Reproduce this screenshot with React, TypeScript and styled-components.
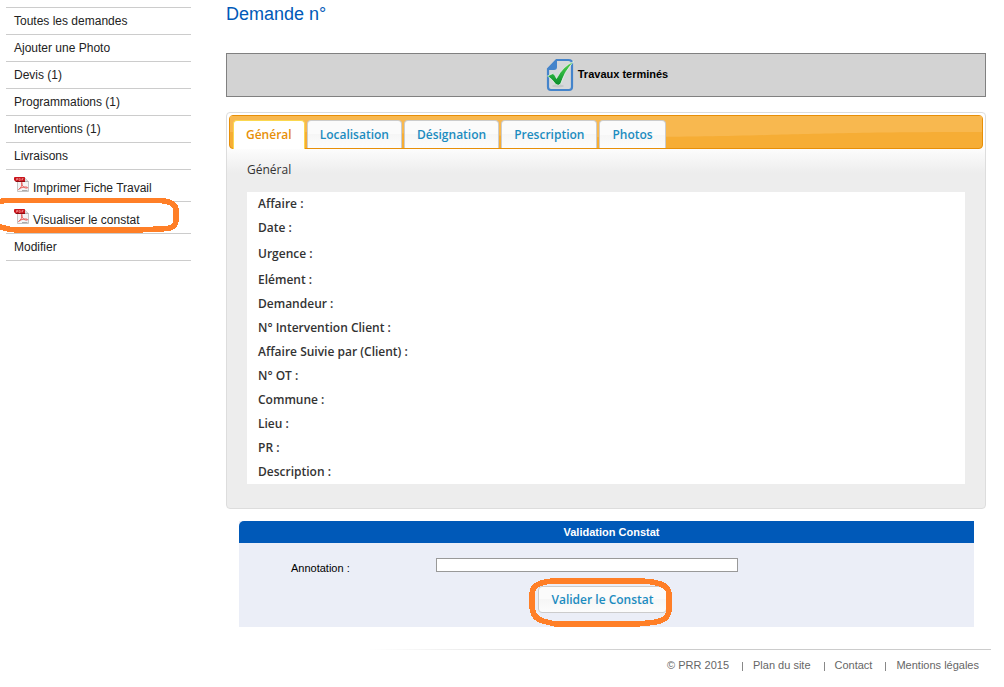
import React from "react";
import styled, { createGlobalStyle, css } from "styled-components";

const GlobalStyle = createGlobalStyle`
  * { box-sizing: border-box; }
  body {
    margin: 0;
    background: #fff;
    color: #222;
    font-family: "Liberation Sans", Arial, sans-serif;
    font-size: 12px;
  }
`;

const humanist = css`
  font-family: "Open Sans", "Trebuchet MS", sans-serif;
  font-size: 12px;
`;

const Page = styled.div`
  display: flex;
  align-items: flex-start;
  gap: 35px;
  padding: 0 13px 0 6px;
`;

const Sidebar = styled.nav`
  flex: 0 0 185px;
  margin-top: 7px;
`;

const Menu = styled.ul`
  list-style: none;
  margin: 0;
  padding: 0;
  border-top: 1px solid #ccc;
`;

const MenuItem = styled.li`
  position: relative;
  border-bottom: 1px solid #ccc;
`;

const MenuLink = styled.a<{ $withIcon?: boolean }>`
  display: flex;
  align-items: ${(p) => (p.$withIcon ? "flex-start" : "center")};
  gap: 3px;
  height: ${(p) => (p.$withIcon ? 31 : 26)}px;
  padding: ${(p) => (p.$withIcon ? "6px 8px 0" : "0 8px")};
  color: #222;
  text-decoration: none;
  white-space: nowrap;

  span {
    line-height: 14px;
    padding-top: ${(p) => (p.$withIcon ? 5 : 0)}px;
  }
`;

const Main = styled.main`
  flex: 1;
  min-width: 0;
`;

const Body = styled.div`
  margin-right: 5px;
`;

const Title = styled.h1`
  margin: 4px 0 0;
  color: #0059b8;
  font-size: 18px;
  font-weight: 400;
  line-height: 20px;
`;

const StatusBar = styled.div`
  display: flex;
  align-items: center;
  justify-content: center;
  gap: 4px;
  height: 44px;
  margin-top: 29px;
  padding-left: 2px;
  border: 1px solid #808080;
  background: #d3d3d3;
  color: #000;
  font-size: 11px;
  font-weight: 700;
  line-height: 14px;

  span {
    padding-bottom: 2px;
  }
`;

const TabsBox = styled.section`
  margin-top: 15px;
  padding: 2px;
  border: 1px solid #ddd;
  border-radius: 4px;
  background: linear-gradient(#fff 34px, #fbfbfb 38px, #ededed 60px);
`;

const TabStrip = styled.div`
  position: relative;
  display: flex;
  align-items: flex-end;
  gap: 2px;
  height: 34px;
  padding-left: 3px;
  border: 1px solid #e78f08;
  border-radius: 4px;
  background: #f6ad35;
`;

const Gloss = styled.svg`
  position: absolute;
  inset: 0;
  width: 100%;
  height: 100%;
`;

const Tab = styled.button<{ $active?: boolean }>`
  ${humanist}
  position: relative;
  height: ${(p) => (p.$active ? 29 : 28)}px;
  margin-bottom: ${(p) => (p.$active ? -1 : 0)}px;
  padding: 0 12px;
  border: 1px solid ${(p) => (p.$active ? "#fbd850" : "#ccc")};
  border-bottom: 0;
  border-radius: 4px 4px 0 0;
  background: ${(p) => (p.$active ? "#fff" : "linear-gradient(#fbfbfb 50%, #f6f6f6 50%, #fcfcfc)")};
  color: ${(p) => (p.$active ? "#e78f08" : "#1c8cc0")};
  font-weight: 600;
  line-height: 16px;
  white-space: nowrap;
`;

const TabPanel = styled.div`
  padding: 13px 18px 22px;
  color: #333;
`;

const PanelTitle = styled.h2`
  ${humanist}
  margin: 0 0 14px;
  font-weight: 400;
  line-height: 16px;
`;

const Details = styled.table`
  ${humanist}
  width: 100%;
  border-collapse: collapse;
  background: #fff;
`;

const DetailRow = styled.tr<{ $tall?: boolean }>`
  height: ${(p) => (p.$tall ? 28 : 24)}px;

  th {
    width: 45%;
    padding: 0 11px;
    font-weight: 600;
    text-align: left;
    line-height: 16px;
  }
  td {
    padding: 0;
  }
`;

const Form = styled.form`
  margin: 12px 12px 0 13px;
  background: #ebeef7;
  font-size: 11px;
  color: #000;
`;

const FormTitle = styled.h2`
  margin: 0;
  padding-left: 10px;
  border-radius: 5px 0 0 0;
  background: #0059b8;
  color: #fff;
  font-size: 11px;
  line-height: 22px;
  text-align: center;
`;

const Field = styled.div`
  display: flex;
  align-items: flex-start;
  padding: 15px 20px 0 52px;

  label {
    flex: 0 0 145px;
    padding-top: 3px;
    line-height: 14px;
  }
  input {
    width: 302px;
    height: 14px;
    padding: 0 2px;
    border: 1px solid #999;
    background: #fff;
    font: inherit;
  }
`;

const Actions = styled.div`
  display: flex;
  justify-content: center;
  padding: 11px 8px 14px 0;
`;

const Marked = styled.div`
  position: relative;
`;

const SubmitButton = styled.button`
  ${humanist}
  display: block;
  height: 27px;
  padding: 0 12px;
  border: 1px solid #ccc;
  border-radius: 4px;
  background: linear-gradient(#fbfbfb 50%, #f6f6f6 50%, #fcfcfc);
  color: #1c8cc0;
  font-weight: 600;
  line-height: 16px;
`;

const Marker = styled.svg<{ $left: number; $top: number }>`
  position: absolute;
  left: ${(p) => p.$left}px;
  top: ${(p) => p.$top}px;
  overflow: visible;
  pointer-events: none;
  fill: none;
  stroke: #ff7f27;
  stroke-width: 5.5;
`;

const Footer = styled.footer`
  margin: 22px 0 0 142px;
  padding: 8px 12px 14px 0;
  border-top: 1px solid;
  border-image: linear-gradient(to right, #fff, #ccc 45%) 1;
`;

const FooterList = styled.ul`
  display: flex;
  justify-content: flex-end;
  list-style: none;
  margin: 0;
  padding: 0;
  color: #666;
  font-size: 11px;
  line-height: 14px;

  li + li {
    display: flex;
    align-items: center;
    margin-left: 13px;
  }
  li + li::before {
    content: "";
    width: 1px;
    height: 9px;
    margin: 2px 10px 0 0;
    background: #888;
  }
  a {
    color: inherit;
    text-decoration: none;
  }
`;

const PdfIcon = () => (
  <svg width="16" height="16" viewBox="0 0 16 16" aria-hidden="true">
    <path d="M3.5 1.5H10.5L14.5 5.5V15.5H3.5Z" fill="#f3f3f3" stroke="#c4c4c4" />
    <path d="M10.5 1.5V5.5H14.5" fill="#dcdcdc" stroke="#b0b0b0" />
    <path d="M4.5 13.500C7 12 8.500 9 8 6.500C7.500 5.500 7 7 8 9C9 11 11 12.500 13.500 12C14.500 11 11 10.500 8 11.500C6.500 12 5 13 4.500 13.500Z" fill="none" stroke="#e8605c" />
    <path d="M0 2Q0 1 1 1H10Q11 1 11 2V5H1L0 4Z" fill="#c9141b" />
    <path d="M1 5H11V6H2Z" fill="#8f0d12" />
    <path d="M2.500 4.500V2.500H4V3.500H2.500M5.200 2.500V4.500H6.200L6.700 3.500L6.200 2.500ZM8 4.500V2.500H9.500M8 3.500H9" fill="none" stroke="#f3a3a3" strokeWidth=".6" />
    <path d="M8 14.500H13.500" stroke="#aaa" />
  </svg>
);

const DoneIcon = () => (
  <svg width="28" height="34" viewBox="0 0 28 34" aria-hidden="true">
    <defs>
      <linearGradient id="tick" x1="0" y1="0" x2="0" y2="1">
        <stop offset="0" stopColor="#5ad04f" />
        <stop offset="0.5" stopColor="#2cb33f" />
        <stop offset="1" stopColor="#078a2b" />
      </linearGradient>
    </defs>
    <path d="M10.500 2H22.500Q26 2 26 5V29Q26 32 23 32H5Q2 32 2 29V11Z" fill="#d6d8da" stroke="#4484cb" strokeWidth="2.200" />
    <path d="M1 12L11 1V9Q11 12 8 12Z" fill="#4484cb" />
    <ellipse cx="12" cy="28" rx="6" ry="1.500" fill="#c3c7c9" />
    <path d="M1.500 18L7 15.500Q9 17 10.500 20.500Q17 8 27.500 3.500Q18 14 14.500 26Q12.500 28 10 26.500Q6 21 1.500 18Z" fill="url(#tick)" stroke="#edf5ed" strokeWidth=".7" />
  </svg>
);

const menu: { label: string; pdf?: boolean; marked?: boolean }[] = [
  { label: "Toutes les demandes" },
  { label: "Ajouter une Photo" },
  { label: "Devis (1)" },
  { label: "Programmations (1)" },
  { label: "Interventions (1)" },
  { label: "Livraisons" },
  { label: "Imprimer Fiche Travail", pdf: true },
  { label: "Visualiser le constat", pdf: true, marked: true },
  { label: "Modifier" },
];

const tabs = ["Général", "Localisation", "Désignation", "Prescription", "Photos"];

const details = [
  "Affaire",
  "Date",
  "Urgence",
  "Elément",
  "Demandeur",
  "N° Intervention Client",
  "Affaire Suivie par (Client)",
  "N° OT",
  "Commune",
  "Lieu",
  "PR",
  "Description",
];

export default function App() {
  return (
    <>
      <GlobalStyle />
      <Page>
        <Sidebar>
          <Menu>
            {menu.map((item) => (
              <MenuItem key={item.label}>
                <MenuLink href="#" $withIcon={item.pdf}>
                  {item.pdf && <PdfIcon />}
                  <span>{item.label}</span>
                </MenuLink>
                {item.marked && (
                  <Marker $left={-6} $top={-5} width="180" height="37" shapeRendering="crispEdges">
                    <path d="M-3 5L5 3.500H158C169 4 175 6 176 12V23C176 30 171 32 158 32L138 33H16L8 32L-3 29" />
                  </Marker>
                )}
              </MenuItem>
            ))}
          </Menu>
        </Sidebar>
        <Main>
          <Body>
            <Title>Demande n°</Title>
            <StatusBar>
              <DoneIcon />
              <span>Travaux terminés</span>
            </StatusBar>
            <TabsBox>
              <TabStrip role="tablist">
                <Gloss viewBox="0 0 754 32" preserveAspectRatio="none" aria-hidden="true">
                  <path d="M0 0H754V16C560 16 540 21 400 21C240 21 200 16 0 16Z" fill="#f8b84f" />
                </Gloss>
                {tabs.map((tab, i) => (
                  <Tab key={tab} type="button" role="tab" aria-selected={i === 0} $active={i === 0}>
                    {tab}
                  </Tab>
                ))}
              </TabStrip>
              <TabPanel role="tabpanel">
                <PanelTitle>Général</PanelTitle>
                <Details>
                  <tbody>
                    {details.map((name) => (
                      <DetailRow key={name} $tall={name === "Urgence"}>
                        <th scope="row">{name} :</th>
                        <td />
                      </DetailRow>
                    ))}
                  </tbody>
                </Details>
              </TabPanel>
            </TabsBox>
            <Form onSubmit={(e) => e.preventDefault()}>
              <FormTitle>Validation Constat</FormTitle>
              <Field>
                <label htmlFor="annotation">Annotation :</label>
                <input id="annotation" type="text" />
              </Field>
              <Actions>
                <Marked>
                  <SubmitButton type="submit">Valider le Constat</SubmitButton>
                  <Marker $left={-9} $top={-8} width="143" height="49" shapeRendering="crispEdges">
                    <path d="M24 3H113C130 4 139 7 140 15V33C139 41 132 44 119 45L108 46H26L14 43C6 41 3 35 3 27V15C4 7 11 4 24 3Z" />
                  </Marker>
                </Marked>
              </Actions>
            </Form>
          </Body>
          <Footer>
            <FooterList>
              <li>© PRR 2015</li>
              <li><a href="#">Plan du site</a></li>
              <li><a href="#">Contact</a></li>
              <li><a href="#">Mentions légales</a></li>
            </FooterList>
          </Footer>
        </Main>
      </Page>
    </>
  );
}
